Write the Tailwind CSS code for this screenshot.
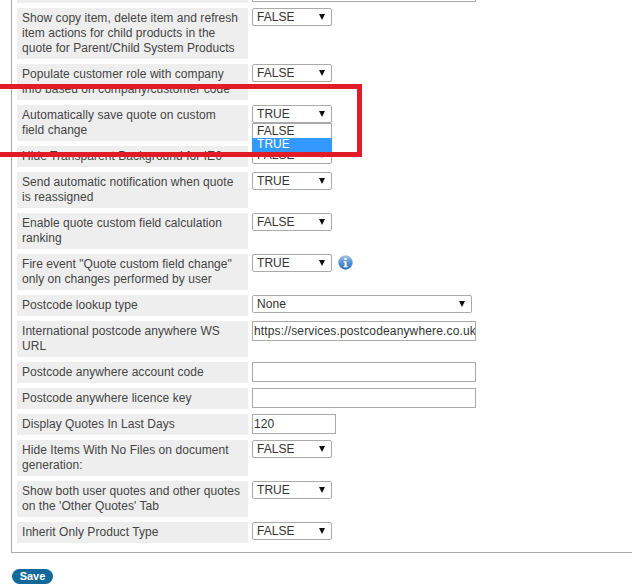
<!DOCTYPE html>
<html lang="en">
<head>
    <meta charset="UTF-8">
    <title>Quote Settings</title>
    <script src="https://cdn.jsdelivr.net/npm/@tailwindcss/browser@4"></script>
</head>
<body class="bg-white overflow-hidden h-[588px] w-[632px] relative font-['Liberation_Sans',Arial,sans-serif] text-[12px] leading-[15px] text-[#444] tracking-[0.05px]">

    <form class="-mt-[18px]">
        <div class="ml-[11px] -mr-[20px] h-[571px] border-l border-b border-[#aaa] pl-[5px] flex flex-col gap-[5px]">

            <div class="flex">
                <div class="w-[231px] h-[21px] bg-[#eee]"></div>
                <div class="ml-[4px] w-[224px] h-[20px] border border-[#aaa] bg-white"></div>
            </div>

            <div class="flex">
                <div class="w-[231px] bg-[#eee] px-[5px] py-[3px]">Show copy item, delete item and refresh item actions for child products in the quote for Parent/Child System Products</div>
                <div class="ml-[4px] w-[80px] h-[18px] border border-[#aaa] rounded-[2px] bg-white pl-[4px] pr-[6px] flex items-center justify-between text-[#333]">FALSE<svg width="6" height="6" viewBox="0 0 6 6"><path d="M0 0h6L3 6z" fill="#111"/></svg></div>
            </div>

            <div class="flex">
                <div class="w-[231px] bg-[#eee] px-[5px] py-[3px]">Populate customer role with company info based on company/customer code</div>
                <div class="ml-[4px] w-[80px] h-[18px] border border-[#aaa] rounded-[2px] bg-white pl-[4px] pr-[6px] flex items-center justify-between text-[#333]">FALSE<svg width="6" height="6" viewBox="0 0 6 6"><path d="M0 0h6L3 6z" fill="#111"/></svg></div>
            </div>

            <div class="flex">
                <div class="w-[231px] bg-[#eee] px-[5px] py-[3px]">Automatically save quote on custom<br>field change</div>
                <div class="ml-[4px] w-[80px] h-[18px] border border-[#aaa] rounded-[2px] bg-white pl-[4px] pr-[6px] flex items-center justify-between text-[#333]">TRUE<svg width="6" height="6" viewBox="0 0 6 6"><path d="M0 0h6L3 6z" fill="#111"/></svg></div>
            </div>

            <div class="flex">
                <div class="w-[231px] bg-[#eee] px-[5px] py-[3px]">Hide Transparent Background for IE6</div>
                <div class="ml-[4px] w-[80px] h-[18px] border border-[#aaa] rounded-[2px] bg-white pl-[4px] pr-[6px] flex items-center justify-between text-[#333]">FALSE<svg width="6" height="6" viewBox="0 0 6 6"><path d="M0 0h6L3 6z" fill="#111"/></svg></div>
            </div>

            <div class="flex">
                <div class="w-[231px] bg-[#eee] px-[5px] py-[3px]">Send automatic notification when quote is reassigned</div>
                <div class="ml-[4px] w-[80px] h-[18px] border border-[#aaa] rounded-[2px] bg-white pl-[4px] pr-[6px] flex items-center justify-between text-[#333]">TRUE<svg width="6" height="6" viewBox="0 0 6 6"><path d="M0 0h6L3 6z" fill="#111"/></svg></div>
            </div>

            <div class="flex">
                <div class="w-[231px] bg-[#eee] px-[5px] py-[3px]">Enable quote custom field calculation ranking</div>
                <div class="ml-[4px] w-[80px] h-[18px] border border-[#aaa] rounded-[2px] bg-white pl-[4px] pr-[6px] flex items-center justify-between text-[#333]">FALSE<svg width="6" height="6" viewBox="0 0 6 6"><path d="M0 0h6L3 6z" fill="#111"/></svg></div>
            </div>

            <div class="flex">
                <div class="w-[231px] bg-[#eee] px-[5px] py-[3px]">Fire event "Quote custom field change" only on changes performed by user</div>
                <div class="ml-[4px] w-[80px] h-[18px] border border-[#aaa] rounded-[2px] bg-white pl-[4px] pr-[6px] flex items-center justify-between text-[#333]">TRUE<svg width="6" height="6" viewBox="0 0 6 6"><path d="M0 0h6L3 6z" fill="#111"/></svg></div>
                <svg class="ml-[6px] mt-[1px]" width="15" height="15" viewBox="0 0 15 15">
                    <defs><linearGradient id="infoBlue" x1="0" y1="0" x2="0" y2="1"><stop offset="0" stop-color="#a3c4e6"/><stop offset="0.5" stop-color="#5b93d0"/><stop offset="1" stop-color="#2f6fb5"/></linearGradient></defs>
                    <circle cx="7.5" cy="7.5" r="7.2" fill="url(#infoBlue)"/>
                    <circle cx="7.5" cy="4" r="1.3" fill="#fff"/>
                    <path d="M5.6 6.2h3v4.8h1v1.2H5.6V11h1V7.4h-1z" fill="#fff"/>
                </svg>
            </div>

            <div class="flex">
                <div class="w-[231px] bg-[#eee] px-[5px] py-[3px]">Postcode lookup type</div>
                <div class="ml-[4px] w-[220px] h-[18px] border border-[#aaa] rounded-[2px] bg-white pl-[4px] pr-[6px] flex items-center justify-between text-[#333]">None<svg width="6" height="6" viewBox="0 0 6 6"><path d="M0 0h6L3 6z" fill="#111"/></svg></div>
            </div>

            <div class="flex">
                <div class="w-[231px] bg-[#eee] px-[5px] py-[3px]">International postcode anywhere WS URL</div>
                <div class="ml-[4px] w-[224px] h-[20px] border border-[#aaa] bg-white pl-[1px] flex items-center overflow-hidden whitespace-nowrap text-[#333] tracking-[0.15px]">https://services.postcodeanywhere.co.uk/</div>
            </div>

            <div class="flex">
                <div class="w-[231px] bg-[#eee] px-[5px] py-[3px]">Postcode anywhere account code</div>
                <div class="ml-[4px] w-[224px] h-[20px] border border-[#aaa] bg-white"></div>
            </div>

            <div class="flex">
                <div class="w-[231px] bg-[#eee] px-[5px] py-[3px]">Postcode anywhere licence key</div>
                <div class="ml-[4px] w-[224px] h-[20px] border border-[#aaa] bg-white"></div>
            </div>

            <div class="flex">
                <div class="w-[231px] bg-[#eee] px-[5px] py-[3px]">Display Quotes In Last Days</div>
                <div class="ml-[4px] w-[84px] h-[20px] border border-[#aaa] bg-white pl-[1px] flex items-center text-[#333]">120</div>
            </div>

            <div class="flex">
                <div class="w-[231px] bg-[#eee] px-[5px] py-[3px]">Hide Items With No Files on document generation:</div>
                <div class="ml-[4px] w-[80px] h-[18px] border border-[#aaa] rounded-[2px] bg-white pl-[4px] pr-[6px] flex items-center justify-between text-[#333]">FALSE<svg width="6" height="6" viewBox="0 0 6 6"><path d="M0 0h6L3 6z" fill="#111"/></svg></div>
            </div>

            <div class="flex">
                <div class="w-[231px] bg-[#eee] px-[5px] py-[3px]">Show both user quotes and other quotes on the 'Other Quotes' Tab</div>
                <div class="ml-[4px] w-[80px] h-[18px] border border-[#aaa] rounded-[2px] bg-white pl-[4px] pr-[6px] flex items-center justify-between text-[#333]">TRUE<svg width="6" height="6" viewBox="0 0 6 6"><path d="M0 0h6L3 6z" fill="#111"/></svg></div>
            </div>

            <div class="flex">
                <div class="w-[231px] bg-[#eee] px-[5px] py-[3px]">Inherit Only Product Type</div>
                <div class="ml-[4px] w-[80px] h-[18px] border border-[#aaa] rounded-[2px] bg-white pl-[4px] pr-[6px] flex items-center justify-between text-[#333]">FALSE<svg width="6" height="6" viewBox="0 0 6 6"><path d="M0 0h6L3 6z" fill="#111"/></svg></div>
            </div>
        </div>

        <button type="button" class="block ml-[12px] mt-[16px] w-[41px] h-[15px] rounded-full bg-[#14699b] text-white font-bold text-[11px] leading-[15px] tracking-normal text-center">Save</button>
    </form>

    <!-- open dropdown -->
    <div class="absolute left-[252px] top-[123px] w-[80px] h-[30px] border border-b-0 border-[#aaa] bg-white text-[#333]">
        <div class="pl-[4px] h-[14px]">FALSE</div>
        <div class="-mx-[1px] pl-[5px] h-[15px] leading-[13px] bg-[#3399ff] text-white">TRUE</div>
    </div>

    <!-- red annotation box -->
    <div class="absolute left-[-10px] top-[84px] w-[372px] h-[73px] border-[5px] border-l-0 border-[#e21c26]"></div>

</body>
</html>
